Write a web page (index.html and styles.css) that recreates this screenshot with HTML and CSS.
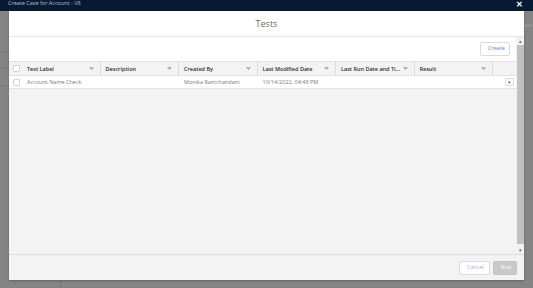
FILE: index.html
```html
<!DOCTYPE html>
<html lang="en">
<head>
    <meta charset="UTF-8">
    <title>Tests</title>
    <link rel="stylesheet" href="styles.css">
</head>
<body>
    <div class="topbar">
        <span class="app-title">Create Case for Account - V8</span>
        <span class="close">&#x2715;</span>
    </div>
    <div class="backdrop">
        <div class="side">
            <div class="side-row"></div>
            <div class="side-row"></div>
            <div class="side-row"></div>
        </div>
        <div class="main">
            <span class="peek">Vale</span>
        </div>
    </div>

    <div class="modal">
        <div class="modal-header">Tests</div>
        <div class="modal-body">
            <div class="content">
                <div class="toolbar">
                    <button class="btn btn-neutral">Create</button>
                </div>
                <div class="row head">
                    <div class="cell check"><span class="box"></span></div>
                    <div class="cell th"><span>Test Label</span><i class="chev"></i></div>
                    <div class="cell th"><span>Description</span><i class="chev"></i></div>
                    <div class="cell th"><span>Created By</span><i class="chev"></i></div>
                    <div class="cell th"><span>Last Modified Date</span><i class="chev"></i></div>
                    <div class="cell th"><span>Last Run Date and Ti...</span><i class="chev"></i></div>
                    <div class="cell th"><span>Result</span><i class="chev"></i></div>
                    <div class="cell"></div>
                </div>
                <div class="row data">
                    <div class="cell check"><span class="box"></span></div>
                    <div class="cell td">Account Name Check</div>
                    <div class="cell td"></div>
                    <div class="cell td">Monika Ramchandani</div>
                    <div class="cell td">10/14/2022, 04:48 PM</div>
                    <div class="cell td"></div>
                    <div class="cell td"></div>
                    <div class="cell menu"><span class="menu-btn">&#9662;</span></div>
                </div>
            </div>
            <div class="scrollbar">
                <span class="arrow">&#9652;</span>
                <span class="thumb"></span>
                <span class="arrow">&#9662;</span>
            </div>
        </div>
        <div class="modal-footer">
            <button class="btn btn-neutral">Cancel</button>
            <button class="btn btn-disabled">Run</button>
        </div>
    </div>
</body>
</html>
```

FILE: styles.css
```css
* {
    margin: 0;
    padding: 0;
    box-sizing: border-box;
    font-family: 'Open Sans', 'Liberation Sans', sans-serif;
}

body {
    width: 533px;
    height: 288px;
    overflow: hidden;
    background: #848484;
}

.topbar {
    height: 11px;
    background: #061a35;
    display: flex;
    align-items: flex-start;
    justify-content: space-between;
    padding: 0 10px 0 8px;
}

.app-title {
    color: #b9c0cb;
    font-size: 5.5px;
    line-height: 7px;
}

.close {
    color: #ffffff;
    font-size: 8px;
    font-weight: 700;
    line-height: 8px;
}

.backdrop {
    display: flex;
    height: 277px;
}

.side {
    width: 61px;
    border-right: 1px solid #767676;
    padding-top: 24px;
}

.side-row {
    height: 17px;
    border-bottom: 1px solid #7a7a7a;
}

.main {
    flex: 1;
    display: flex;
    justify-content: flex-end;
    padding-top: 10px;
}

.peek {
    color: #9aa3ad;
    font-size: 6px;
    margin-right: 1px;
}

/* modal lies over the page */
.modal {
    position: absolute;
    top: 11px;
    left: 9px;
    width: 515px;
    height: 269px;
    background: #f3f3f3;
    display: flex;
    flex-direction: column;
    box-shadow: 0 1px 2px rgba(0, 0, 0, 0.25);
}

.modal-header {
    height: 26px;
    background: #ffffff;
    border-bottom: 1px solid #e5e5e5;
    display: flex;
    align-items: center;
    justify-content: center;
    color: #6b6b6b;
    font-size: 9px;
}

.modal-body {
    flex: 1;
    display: flex;
    border-bottom: 1px solid #dddbda;
}

.content {
    flex: 1;
    background: #f3f3f3;
}

.toolbar {
    height: 24px;
    background: #ffffff;
    display: flex;
    align-items: center;
    justify-content: flex-end;
    padding-right: 6px;
}

.btn {
    height: 14px;
    border-radius: 2px;
    font-size: 5.5px;
    line-height: 1;
    padding: 0 7px;
}

.btn-neutral {
    background: #ffffff;
    border: 1px solid #dddbda;
    color: #5c84d6;
}

.toolbar .btn {
    width: 30px;
}

.btn-disabled {
    background: #c9c9c9;
    border: 1px solid #c2c2c2;
    color: #ffffff;
    width: 24px;
}

.row {
    display: grid;
    grid-template-columns: 13px repeat(6, 78.5px) 1fr;
}

.row.head {
    height: 15px;
    background: #f3f3f3;
    border-top: 1px solid #e2e2e2;
    border-bottom: 1px solid #e2e2e2;
}

.row.data {
    height: 13px;
    background: #ffffff;
    border-bottom: 1px solid #e2e2e2;
}

.cell {
    display: flex;
    align-items: center;
    font-size: 5.5px;
    white-space: nowrap;
    overflow: hidden;
}

.check {
    justify-content: flex-end;
    padding-right: 2px;
}

.box {
    width: 7px;
    height: 7px;
    background: #ffffff;
    border: 1px solid #d4d4d4;
    border-radius: 1px;
}

.th {
    justify-content: space-between;
    padding: 0 7px 0 5px;
    color: #2b2b2b;
    font-weight: 600;
    border-right: 1px solid #dcdcdc;
}

.chev {
    width: 3px;
    height: 3px;
    border-right: 0.8px solid #8a8a8a;
    border-bottom: 0.8px solid #8a8a8a;
    transform: rotate(45deg);
    margin-top: -2px;
}

.td {
    padding-left: 5px;
    color: #7a7a7a;
}

.menu {
    justify-content: flex-end;
    padding-right: 2px;
}

.menu-btn {
    width: 9px;
    height: 8px;
    border: 1px solid #d8d8d8;
    border-radius: 1px;
    background: #ffffff;
    color: #555555;
    font-size: 5px;
    display: flex;
    align-items: center;
    justify-content: center;
}

.scrollbar {
    width: 8px;
    background: #f1f1f1;
    display: flex;
    flex-direction: column;
    align-items: center;
}

.arrow {
    height: 8px;
    font-size: 5px;
    color: #606060;
    line-height: 8px;
}

.thumb {
    flex: 1;
    width: 7px;
    background: #c1c1c1;
    margin-bottom: 2px;
}

.modal-footer {
    height: 25px;
    display: flex;
    align-items: center;
    justify-content: flex-end;
    gap: 3px;
    padding-right: 7px;
}

.modal-footer .btn-neutral {
    width: 31px;
    color: #9bb4e4;
}
```
